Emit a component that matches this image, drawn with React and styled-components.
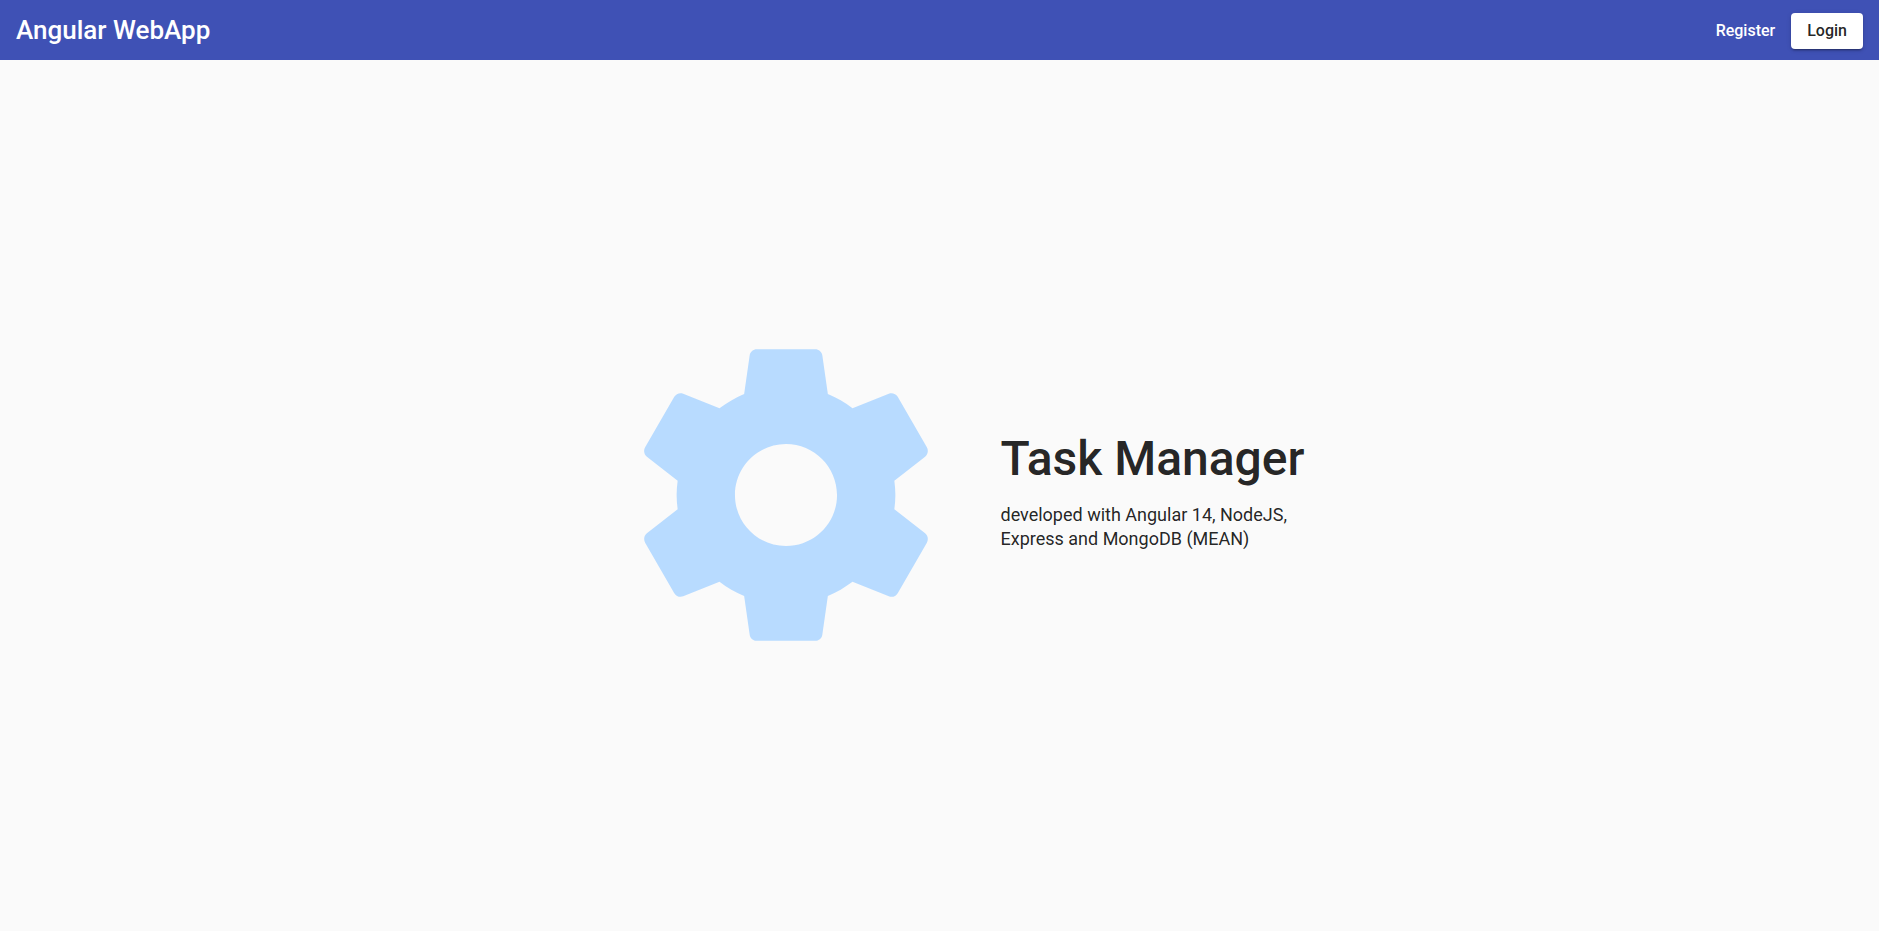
import React from "react";
import styled, { createGlobalStyle } from "styled-components";

const GlobalStyle = createGlobalStyle`
  body {
    margin: 0;
    background: #fafafa;
    color: rgba(0, 0, 0, 0.87);
    font-family: Roboto, "Helvetica Neue", sans-serif;
  }
`;

const Page = styled.div`
  display: flex;
  flex-direction: column;
  min-height: 100vh;
`;

const Toolbar = styled.header`
  display: flex;
  align-items: center;
  justify-content: space-between;
  box-sizing: border-box;
  height: 60px;
  padding: 2px 16px 0;
  background: #3f51b5;
  color: #fff;
`;

const Brand = styled.a`
  color: inherit;
  font-size: 26px;
  font-weight: 500;
  line-height: 34px;
  padding-bottom: 2px;
  text-decoration: none;
`;

const Actions = styled.nav`
  display: flex;
  align-items: center;
`;

const NavButton = styled.button`
  height: 36px;
  padding: 0 16px;
  border: 0;
  border-radius: 4px;
  font: 500 16px/36px Roboto, sans-serif;
  cursor: pointer;
  color: ${(p) => (p.$raised ? "rgba(0, 0, 0, 0.87)" : "#fff")};
  background: ${(p) => (p.$raised ? "#fff" : "transparent")};
  box-shadow: ${(p) =>
    p.$raised
      ? "0 3px 1px -2px rgba(0,0,0,.2), 0 2px 2px 0 rgba(0,0,0,.14), 0 1px 5px 0 rgba(0,0,0,.12)"
      : "none"};
`;

const Hero = styled.main`
  display: flex;
  flex: 1;
  flex-wrap: wrap;
  align-items: center;
  justify-content: center;
  gap: 40px;
  padding: 0 0 2px 52px;
`;

const Gear = styled.svg`
  width: 350px;
  height: 350px;
  fill: #b8dbff;
`;

const Intro = styled.section`
  width: 320px;
  padding-bottom: 8px;
`;

const Title = styled.h1`
  margin: 0 0 16px;
  font-size: 48px;
  font-weight: 500;
  line-height: 56px;
`;

const Lead = styled.p`
  margin: 0;
  font-size: 18px;
  line-height: 24px;
`;

export default function App() {
  return (
    <Page>
      <GlobalStyle />
      <Toolbar>
        <Brand href="#">Angular WebApp</Brand>
        <Actions>
          <NavButton type="button">Register</NavButton>
          <NavButton type="button" $raised>Login</NavButton>
        </Actions>
      </Toolbar>
      <Hero>
        <Gear viewBox="0 0 24 24" aria-hidden="true">
          <path d="M19.43 12.98c.04-.32.07-.64.07-.98s-.03-.66-.07-.98l2.11-1.65c.19-.15.24-.42.12-.64l-2-3.46c-.12-.22-.39-.3-.61-.22l-2.49 1c-.52-.4-1.08-.73-1.69-.98l-.38-2.65C14.46 2.18 14.25 2 14 2h-4c-.25 0-.46.18-.49.42l-.38 2.65c-.61.25-1.17.59-1.69.98l-2.49-1c-.23-.09-.49 0-.61.22l-2 3.46c-.13.22-.07.49.12.64l2.11 1.65c-.04.32-.07.65-.07.98s.03.66.07.98l-2.11 1.65c-.19.15-.24.42-.12.64l2 3.46c.12.22.39.3.61.22l2.49-1c.52.4 1.08.73 1.69.98l.38 2.65c.03.24.24.42.49.42h4c.25 0 .46-.18.49-.42l.38-2.65c.61-.25 1.17-.59 1.69-.98l2.49 1c.23.09.49 0 .61-.22l2-3.46c.12-.22.07-.49-.12-.64l-2.11-1.65zM12 15.5c-1.93 0-3.5-1.57-3.5-3.5s1.57-3.5 3.5-3.5 3.5 1.57 3.5 3.5-1.57 3.5-3.5 3.5z" />
        </Gear>
        <Intro>
          <Title>Task Manager</Title>
          <Lead>developed with Angular 14, NodeJS, Express and MongoDB (MEAN)</Lead>
        </Intro>
      </Hero>
    </Page>
  );
}
